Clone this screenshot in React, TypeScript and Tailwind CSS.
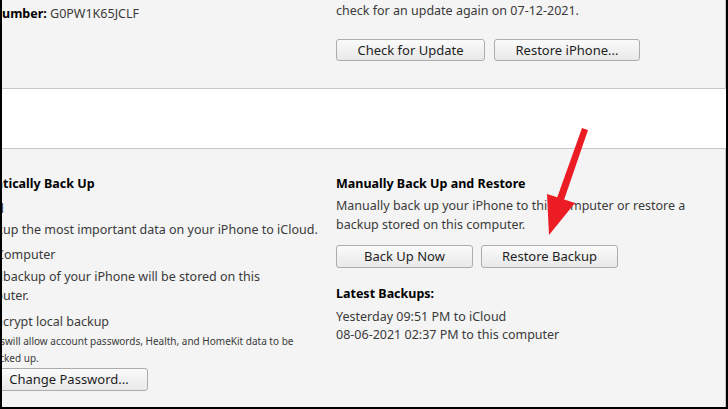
import React from "react";

const font = { fontFamily: '"Noto Sans", "Open Sans", sans-serif' };

function Clip({
  prefix,
  box,
  children,
  className = "",
}: {
  prefix: string;
  box: string;
  children?: React.ReactNode;
  className?: string;
}) {
  return (
    <div className={"flex whitespace-nowrap " + className}>
      <span className={"flex justify-end overflow-hidden shrink-0 " + box}>
        <span className="shrink-0">{prefix}</span>
      </span>
      <span>{children}</span>
    </div>
  );
}

function Btn({ children, className = "" }: { children: React.ReactNode; className?: string }) {
  return (
    <div
      className={
        "flex items-center justify-center rounded-[3px] border border-[#acacac] bg-gradient-to-b from-[#fbfbfb] via-[#f1f1f1] to-[#e9e9e9] text-[#1e1e1e] text-[13px] leading-none " +
        className
      }
    >
      {children}
    </div>
  );
}

function Arrow() {
  return (
    <svg className="absolute left-0 top-0 pointer-events-none" width="728" height="409" viewBox="0 0 728 409">
      <polygon points="580,128 586,130 562,200 555,198" fill="#ec1c24" />
      <polygon points="545,194 573,203 547,235" fill="#ec1c24" />
    </svg>
  );
}

export default function App() {
  return (
    <div
      style={font}
      className="relative w-[728px] h-[409px] overflow-hidden bg-white border-l-2 border-r-2 border-b-2 border-black text-[#3a3a3a] text-[12.5px] leading-[18px]"
    >
      {/* top panel */}
      <div className="h-[89px] bg-[#f4f4f4] border-b border-r border-[#c8c8c8] flex pt-[4px]">
        <div className="w-[334px] shrink-0 mt-[1px]">
          <Clip prefix="Serial N" box="w-0">
            <span className="font-bold text-black">umber:</span> G0PW1K65JCLF
          </Clip>
        </div>
        <div className="flex flex-col">
          <div className="mt-[-2px]">check for an update again on 07-12-2021.</div>
          <div className="flex gap-[9px] mt-[19px]">
            <Btn className="w-[149px] h-[22px]">Check for Update</Btn>
            <Btn className="w-[146px] h-[22px]">Restore iPhone...</Btn>
          </div>
        </div>
      </div>

      {/* white band */}
      <div className="h-[60px] bg-white border-b border-[#c8c8c8]" />

      {/* bottom panel */}
      <div className="h-[258px] bg-[#f4f4f4] border-r border-[#c8c8c8] flex pt-[26px]">
        <div className="w-[334px] shrink-0 flex flex-col">
          <Clip prefix="Automa" box="w-[1px]" className="font-bold text-black">
            tically Back Up
          </Clip>
          <Clip prefix="iCloud" box="w-[2px]" className="mt-[7px]" />
          <Clip prefix="Back " box="w-[1px]" className="mt-[3px]">
            up the most important data on your iPhone to iCloud.
          </Clip>
          <Clip prefix="This C" box="w-[2px]" className="mt-[7px]">
            omputer
          </Clip>
          <Clip prefix="A full " box="w-[1px]" className="mt-[4px]">
            backup of your iPhone will be stored on this
          </Clip>
          <Clip prefix="comp" box="w-[1px]" className="mt-[1px]">
            uter.
          </Clip>
          <Clip prefix="En" box="w-[1px]" className="mt-[8px]">
            crypt local backup
          </Clip>
          <Clip prefix="This" box="w-[3px]" className="mt-[2px] text-[10px] leading-[17px]">
            {" will allow account passwords, Health, and HomeKit data to be"}
          </Clip>
          <Clip prefix="bac" box="w-[2px]" className="text-[10px] leading-[17px]">
            ked up.
          </Clip>
          <Btn className="ml-[-12px] mt-[1px] w-[158px] h-[23px]">Change Password...</Btn>
        </div>
        <div className="flex flex-col">
          <div className="font-bold text-black">Manually Back Up and Restore</div>
          <div className="mt-[4px]">Manually back up your iPhone to this computer or restore a</div>
          <div className="mt-[1px]">backup stored on this computer.</div>
          <div className="flex gap-[8px] mt-[11px]">
            <Btn className="w-[137px] h-[23px]">Back Up Now</Btn>
            <Btn className="w-[137px] h-[23px]">Restore Backup</Btn>
          </div>
          <div className="mt-[17px] font-bold text-black">Latest Backups:</div>
          <div className="mt-[5px]">Yesterday 09:51 PM to iCloud</div>
          <div>08-06-2021 02:37 PM to this computer</div>
        </div>
      </div>

      <Arrow />
    </div>
  );
}
